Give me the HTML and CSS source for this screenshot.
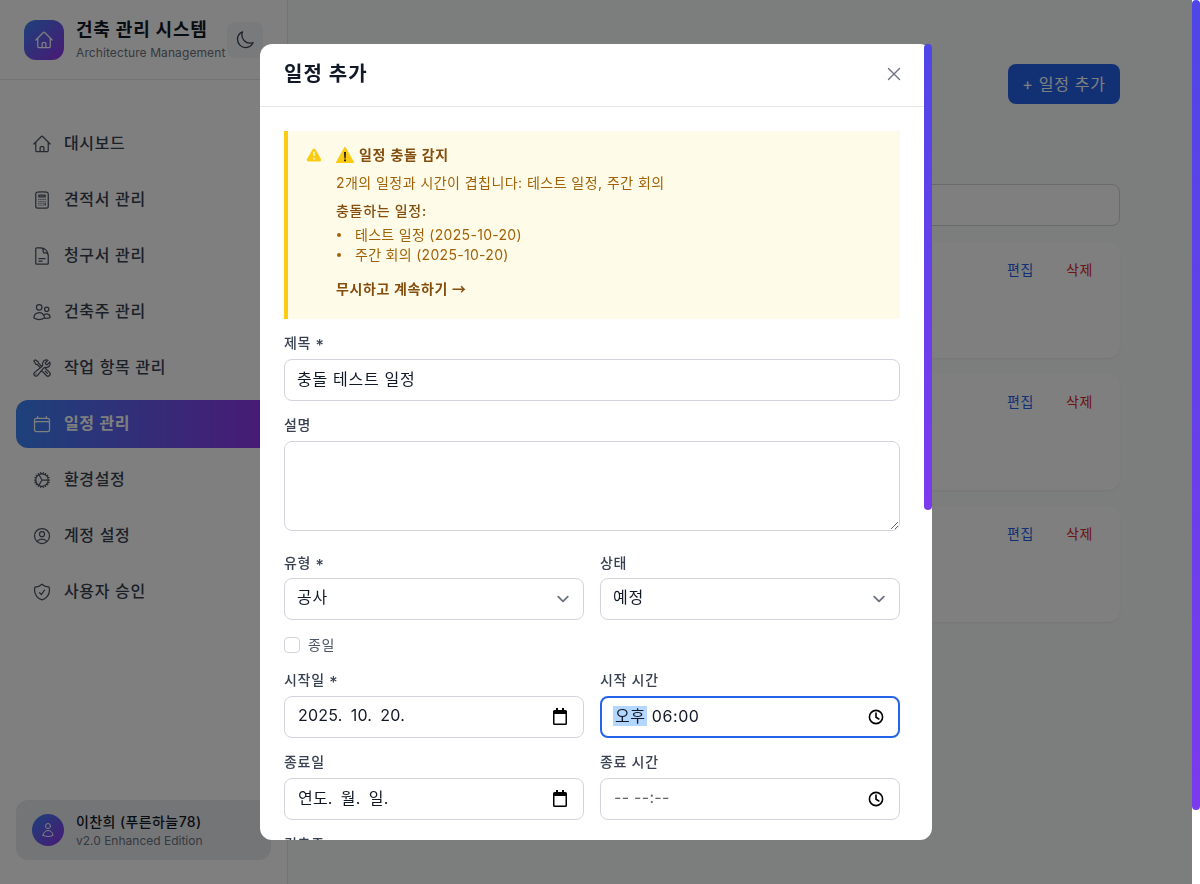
FILE: index.html
```html
<!DOCTYPE html>
<html lang="ko">
<head>
  <meta charset="UTF-8">
  <title>건축 관리 시스템 | 일정 관리</title>
  <meta name="viewport" content="width=device-width, initial-scale=1.0" />
  <link rel="stylesheet" href="styles.css">
</head>
<body>
  <svg class="sprite" aria-hidden="true">
    <symbol id="i-home" viewBox="0 0 24 24"><path d="m2.25 12 8.954-8.955c.44-.439 1.152-.439 1.591 0L21.75 12M4.5 9.75v10.125c0 .621.504 1.125 1.125 1.125H9.75v-4.875c0-.621.504-1.125 1.125-1.125h2.25c.621 0 1.125.504 1.125 1.125V21h4.125c.621 0 1.125-.504 1.125-1.125V9.75M8.25 21h8.25"/></symbol>
    <symbol id="i-picker-date" viewBox="0 0 20 20"><path class="solid" d="M6 1h2v2h4V1h2v2h1.5A1.5 1.5 0 0 1 17 4.5v12a1.5 1.5 0 0 1-1.5 1.5h-11A1.5 1.5 0 0 1 3 16.5v-12A1.5 1.5 0 0 1 4.5 3H6V1zM4.5 7v9.5h11V7h-11z"/></symbol>
    <symbol id="i-picker-time" viewBox="0 0 20 20"><circle cx="10" cy="10" r="6.6" class="line"/><path class="line" d="M10 6v4.3l2.8 1.7"/></symbol>
  </svg>

  <div class="app">
    <aside class="sidebar">
      <div class="brand">
        <div class="brand-logo">
          <svg class="icon" viewBox="0 0 24 24"><use href="#i-home"/></svg>
        </div>
        <div class="brand-text">
          <div class="brand-name">건축 관리 시스템</div>
          <div class="brand-sub">Architecture Management</div>
        </div>
        <button class="theme-toggle" type="button" aria-label="테마">
          <svg class="icon" viewBox="0 0 24 24"><path d="M21.752 15.002A9.72 9.72 0 0 1 18 15.75c-5.385 0-9.75-4.365-9.75-9.75 0-1.33.266-2.597.748-3.752A9.753 9.753 0 0 0 3 11.25C3 16.635 7.365 21 12.75 21a9.753 9.753 0 0 0 9.002-5.998Z"/></svg>
        </button>
      </div>

      <nav class="nav">
        <a class="nav-item" href="#">
          <svg class="icon" viewBox="0 0 24 24"><use href="#i-home"/></svg>
          <span>대시보드</span>
        </a>
        <a class="nav-item" href="#">
          <svg class="icon" viewBox="0 0 24 24"><path d="M15.75 15.75V18m-7.5-6.75h.008v.008H8.25v-.008Zm0 2.25h.008v.008H8.25V13.5Zm0 2.25h.008v.008H8.25v-.008Zm0 2.25h.008v.008H8.25V18Zm2.498-6.75h.007v.008h-.007v-.008Zm0 2.25h.007v.008h-.007V13.5Zm0 2.25h.007v.008h-.007v-.008Zm0 2.25h.007v.008h-.007V18Zm2.504-6.75h.008v.008h-.008v-.008Zm0 2.25h.008v.008h-.008V13.5Zm0 2.25h.008v.008h-.008v-.008Zm0 2.25h.008v.008h-.008V18Zm2.498-6.75h.008v.008h-.008v-.008Zm0 2.25h.008v.008h-.008V13.5ZM8.25 6h7.5v2.25h-7.5V6ZM12 2.25c-1.892 0-3.758.11-5.593.322C5.307 2.7 4.5 3.65 4.5 4.757V19.5a2.25 2.25 0 0 0 2.25 2.25h10.5a2.25 2.25 0 0 0 2.25-2.25V4.757c0-1.108-.806-2.057-1.907-2.185A48.507 48.507 0 0 0 12 2.25Z"/></svg>
          <span>견적서 관리</span>
        </a>
        <a class="nav-item" href="#">
          <svg class="icon" viewBox="0 0 24 24"><path d="M19.5 14.25v-2.625a3.375 3.375 0 0 0-3.375-3.375h-1.5A1.125 1.125 0 0 1 13.5 7.125v-1.5a3.375 3.375 0 0 0-3.375-3.375H8.25m0 12.75h7.5m-7.5 3H12M10.5 2.25H5.625c-.621 0-1.125.504-1.125 1.125v17.25c0 .621.504 1.125 1.125 1.125h12.75c.621 0 1.125-.504 1.125-1.125V11.25a9 9 0 0 0-9-9Z"/></svg>
          <span>청구서 관리</span>
        </a>
        <a class="nav-item" href="#">
          <svg class="icon" viewBox="0 0 24 24"><path d="M15 19.128a9.38 9.38 0 0 0 2.625.372 9.337 9.337 0 0 0 4.121-.952 4.125 4.125 0 0 0-7.533-2.493M15 19.128v-.003c0-1.113-.285-2.16-.786-3.07M15 19.128v.106A12.318 12.318 0 0 1 8.624 21c-2.331 0-4.512-.645-6.374-1.766l-.001-.109a6.375 6.375 0 0 1 11.964-3.07M12 6.375a3.375 3.375 0 1 1-6.75 0 3.375 3.375 0 0 1 6.75 0Zm8.25 2.25a2.625 2.625 0 1 1-5.25 0 2.625 2.625 0 0 1 5.25 0Z"/></svg>
          <span>건축주 관리</span>
        </a>
        <a class="nav-item" href="#">
          <svg class="icon" viewBox="0 0 24 24"><path d="M11.42 15.17 17.25 21A2.652 2.652 0 0 0 21 17.25l-5.877-5.877M11.42 15.17l2.496-3.03c.317-.384.74-.626 1.208-.766M11.42 15.17l-4.655 5.653a2.548 2.548 0 1 1-3.586-3.586l6.837-5.63m5.108-.233c.55-.164 1.163-.188 1.743-.14a4.5 4.5 0 0 0 4.486-6.336l-3.276 3.277a3.004 3.004 0 0 1-2.25-2.25l3.276-3.276a4.5 4.5 0 0 0-6.336 4.486c.091 1.076-.071 2.264-.904 2.95l-.102.085m-1.745 1.437L5.909 7.5H4.5L2.25 3.75l1.5-1.5L7.5 4.5v1.409l4.26 4.26m-1.745 1.437 1.745-1.437m6.615 8.206L15.75 15.75M4.867 19.125h.008v.008h-.008v-.008Z"/></svg>
          <span>작업 항목 관리</span>
        </a>
        <a class="nav-item active" href="#">
          <svg class="icon" viewBox="0 0 24 24"><path d="M6.75 3v2.25M17.25 3v2.25M3 18.75V7.5a2.25 2.25 0 0 1 2.25-2.25h13.5A2.25 2.25 0 0 1 21 7.5v11.25m-18 0A2.25 2.25 0 0 0 5.25 21h13.5A2.25 2.25 0 0 0 21 18.75m-18 0v-7.5A2.25 2.25 0 0 1 5.25 9h13.5A2.25 2.25 0 0 1 21 11.25v7.5"/></svg>
          <span>일정 관리</span>
        </a>
        <a class="nav-item" href="#">
          <svg class="icon" viewBox="0 0 24 24"><path d="M4.5 12a7.5 7.5 0 0 0 15 0m-15 0a7.5 7.5 0 1 1 15 0m-15 0H3m16.5 0H21m-1.5 0H12m-8.457 3.077 1.41-.513m14.095-5.13 1.41-.513M5.106 17.785l1.15-.964m11.49-9.642 1.149-.964M7.501 19.795l.75-1.3m7.5-12.99.75-1.3m-6.063 16.658.26-1.477m2.605-14.772.26-1.477m0 17.726-.26-1.477M10.698 4.614l-.26-1.477M16.5 19.794l-.75-1.299M7.5 4.205 12 12m6.894 5.785-1.149-.964M6.256 7.178l-1.15-.964m15.352 8.864-1.41-.513M4.954 9.435l-1.41-.514M12.002 12l-3.75 6.495"/></svg>
          <span>환경설정</span>
        </a>
        <a class="nav-item" href="#">
          <svg class="icon" viewBox="0 0 24 24"><path d="M17.982 18.725A7.488 7.488 0 0 0 12 15.75a7.488 7.488 0 0 0-5.982 2.975m11.963 0a9 9 0 1 0-11.963 0m11.963 0A8.966 8.966 0 0 1 12 21a8.966 8.966 0 0 1-5.982-2.275M15 9.75a3 3 0 1 1-6 0 3 3 0 0 1 6 0Z"/></svg>
          <span>계정 설정</span>
        </a>
        <a class="nav-item" href="#">
          <svg class="icon" viewBox="0 0 24 24"><path d="M9 12.75 11.25 15 15 9.75m-3-7.036A11.959 11.959 0 0 1 3.598 6 11.99 11.99 0 0 0 3 9.749c0 5.592 3.824 10.29 9 11.623 5.176-1.332 9-6.03 9-11.622 0-1.31-.21-2.571-.598-3.751h-.152c-3.196 0-6.1-1.248-8.25-3.286Z"/></svg>
          <span>사용자 승인</span>
        </a>
      </nav>

      <div class="user-card">
        <div class="user-avatar">
          <svg class="icon" viewBox="0 0 24 24"><path d="M15.75 6a3.75 3.75 0 1 1-7.5 0 3.75 3.75 0 0 1 7.5 0ZM4.501 20.118a7.5 7.5 0 0 1 14.998 0A17.933 17.933 0 0 1 12 21.75c-2.676 0-5.216-.584-7.499-1.632Z"/></svg>
        </div>
        <div>
          <div class="user-name">이찬희 (푸른하늘78)</div>
          <div class="user-sub">v2.0 Enhanced Edition</div>
        </div>
      </div>
    </aside>

    <main class="main">
      <div class="page-head">
        <button class="btn-primary" type="button">+ 일정 추가</button>
      </div>
      <div class="search-box"></div>
      <div class="card-list">
        <div class="card"><a class="link-edit" href="#">편집</a><a class="link-delete" href="#">삭제</a></div>
        <div class="card"><a class="link-edit" href="#">편집</a><a class="link-delete" href="#">삭제</a></div>
        <div class="card"><a class="link-edit" href="#">편집</a><a class="link-delete" href="#">삭제</a></div>
      </div>
    </main>

    <div class="overlay">
      <div class="modal">
        <div class="modal-inner">
          <div class="modal-head">
            <h2>일정 추가</h2>
            <button class="modal-close" type="button" aria-label="닫기">
              <svg class="icon" viewBox="0 0 24 24"><path d="M6 18 18 6M6 6l12 12"/></svg>
            </button>
          </div>

          <div class="modal-body">
            <div class="alert">
              <svg class="alert-icon" viewBox="0 0 20 20"><path fill-rule="evenodd" d="M8.485 2.495c.673-1.167 2.357-1.167 3.03 0l6.28 10.875c.673 1.167-.17 2.625-1.516 2.625H3.72c-1.347 0-2.189-1.458-1.515-2.625L8.485 2.495zM10 5a.75.75 0 01.75.75v3.5a.75.75 0 01-1.5 0v-3.5A.75.75 0 0110 5zm0 9a1 1 0 100-2 1 1 0 000 2z"/></svg>
              <div>
                <div class="alert-title">
                  <svg class="alert-emoji" viewBox="0 0 18 16"><path class="emoji-back" d="M9 0 18 16H0Z"/><path class="emoji-mark" d="M8 5h2l-.3 6.5H8.3ZM8 12.5h2v1.8H8Z"/></svg>
                  일정 충돌 감지
                </div>
                <p class="alert-text">2개의 일정과 시간이 겹칩니다: 테스트 일정, 주간 회의</p>
                <p class="alert-sub">충돌하는 일정:</p>
                <ul class="alert-list">
                  <li>테스트 일정 (2025-10-20)</li>
                  <li>주간 회의 (2025-10-20)</li>
                </ul>
                <a class="alert-link" href="#">무시하고 계속하기 <span class="arrow">→</span></a>
              </div>
            </div>

            <form class="form">
              <div class="field">
                <label>제목 <span class="req">*</span></label>
                <input class="control" type="text" value="충돌 테스트 일정">
              </div>
              <div class="field field-area">
                <label>설명</label>
                <textarea class="control area"></textarea>
              </div>
              <div class="two-col">
                <div class="field">
                  <label class="label-tight">유형 <span class="req">*</span></label>
                  <select class="control select"><option>공사</option></select>
                </div>
                <div class="field">
                  <label class="label-tight">상태</label>
                  <select class="control select"><option>예정</option></select>
                </div>
              </div>
              <label class="check-row"><input type="checkbox"> <span>종일</span></label>
              <div class="two-col">
                <div class="field">
                  <label>시작일 <span class="req">*</span></label>
                  <div class="control picker">
                    <span class="date-value">2025. 10. 20.</span>
                    <svg class="picker-icon" viewBox="0 0 20 20"><use href="#i-picker-date"/></svg>
                  </div>
                </div>
                <div class="field">
                  <label>시작 시간</label>
                  <div class="control picker focused">
                    <span class="time-value"><span class="selected">오후</span> 06:00</span>
                    <svg class="picker-icon" viewBox="0 0 20 20"><use href="#i-picker-time"/></svg>
                  </div>
                </div>
              </div>
              <div class="two-col">
                <div class="field">
                  <label>종료일</label>
                  <div class="control picker">
                    <span class="date-value">연도. 월. 일.</span>
                    <svg class="picker-icon" viewBox="0 0 20 20"><use href="#i-picker-date"/></svg>
                  </div>
                </div>
                <div class="field">
                  <label>종료 시간</label>
                  <div class="control picker">
                    <span class="time-empty">-- --:--</span>
                    <svg class="picker-icon" viewBox="0 0 20 20"><use href="#i-picker-time"/></svg>
                  </div>
                </div>
              </div>
              <div class="field">
                <label>건축주</label>
              </div>
            </form>
          </div>
        </div>

        <div class="modal-thumb"></div>
      </div>
    </div>

    <div class="page-scrollbar"><div class="page-thumb"></div></div>
  </div>
</body>
</html>
```

FILE: styles.css
```css
* {
  box-sizing: border-box;
}

body {
  margin: 0;
  height: 100vh;
  overflow: hidden;
  font-family: Inter, 'Noto Sans CJK KR', sans-serif;
  background-color: #fff;
  color: #111827;
}

.sprite {
  display: none;
}

.app {
  display: flex;
  height: 100vh;
}

.icon {
  width: 20px;
  height: 20px;
  flex: none;
  fill: none;
  stroke: currentColor;
  stroke-width: 1.5;
  stroke-linecap: round;
  stroke-linejoin: round;
}

/* sidebar */
.sidebar {
  width: 288px;
  flex: none;
  display: flex;
  flex-direction: column;
  background: #fff;
  border-right: 1px solid #e5e7eb;
}

.brand {
  height: 80px;
  flex: none;
  display: flex;
  align-items: center;
  padding: 0 24px;
  border-bottom: 1px solid #e5e7eb;
}

.brand-logo {
  width: 40px;
  height: 40px;
  flex: none;
  display: flex;
  align-items: center;
  justify-content: center;
  margin-right: 12px;
  border-radius: 12px;
  background: linear-gradient(135deg, #3b82f6, #9333ea);
  color: #fff;
}

.brand-name {
  font-size: 18px;
  line-height: 24px;
  font-weight: 700;
  letter-spacing: 0.8px;
  white-space: nowrap;
}

.brand-sub {
  margin-top: 3px;
  font-size: 12px;
  line-height: 16px;
  letter-spacing: 0.1px;
  color: #6b7280;
  white-space: nowrap;
}

.theme-toggle {
  width: 36px;
  height: 36px;
  flex: none;
  display: flex;
  align-items: center;
  justify-content: center;
  margin-left: 2px;
  padding: 0;
  border: none;
  border-radius: 8px;
  background: #f3f4f6;
  color: #374151;
}

.nav {
  display: flex;
  flex-direction: column;
  gap: 8px;
  padding: 40px 16px 0;
}

.nav-item {
  height: 48px;
  display: flex;
  align-items: center;
  gap: 12px;
  padding: 0 16px;
  border-radius: 12px;
  font-size: 16px;
  font-weight: 500;
  letter-spacing: 0.65px;
  color: #374151;
  text-decoration: none;
}

.nav-item span {
  margin-bottom: 4px;
}

.nav-item .icon {
  color: #4b5563;
}

.nav-item.active {
  background: linear-gradient(90deg, #3b82f6, #9333ea);
  color: #fff;
  font-weight: 600;
}

.nav-item.active .icon {
  color: #fff;
}

.user-card {
  margin: auto 16px 24px;
  height: 60px;
  flex: none;
  display: flex;
  align-items: center;
  gap: 12px;
  padding: 0 16px;
  border-radius: 12px;
  background: #e9ebef;
}

.user-avatar {
  width: 32px;
  height: 32px;
  flex: none;
  display: flex;
  align-items: center;
  justify-content: center;
  border-radius: 50%;
  background: linear-gradient(135deg, #3b82f6, #9333ea);
  color: #fff;
}

.user-avatar .icon {
  width: 16px;
  height: 16px;
}

.user-name {
  font-size: 14px;
  line-height: 20px;
  font-weight: 500;
  letter-spacing: 0.4px;
}

.user-sub {
  margin-top: 1px;
  font-size: 12px;
  line-height: 16px;
  color: #6b7280;
}

/* main behind the modal */
.main {
  flex: 1;
  min-width: 0;
  padding: 64px 72px 0 32px;
  background: #f9fafb;
}

.page-head {
  display: flex;
  justify-content: flex-end;
}

.btn-primary {
  width: 112px;
  height: 40px;
  padding: 0 0 3px;
  border: none;
  border-radius: 8px;
  background: #2563eb;
  color: #fff;
  font-family: inherit;
  font-size: 16px;
  letter-spacing: 0.7px;
}

.search-box {
  height: 42px;
  margin-top: 80px;
  border: 1px solid #d1d5db;
  border-radius: 8px;
  background: #fff;
}

.card-list {
  display: flex;
  flex-direction: column;
  gap: 16px;
  margin-top: 16px;
}

.card {
  height: 116px;
  display: flex;
  justify-content: flex-end;
  gap: 32px;
  padding: 18px 27px 0 0;
  border-radius: 12px;
  background: #fff;
  box-shadow: 0 1px 2px rgba(0, 0, 0, 0.05);
  font-size: 14px;
  line-height: 20px;
  letter-spacing: 0.6px;
}

.link-edit {
  color: #2563eb;
  text-decoration: none;
}

.link-delete {
  color: #dc2626;
  text-decoration: none;
}

.page-scrollbar {
  width: 8px;
  flex: none;
  background: #fff;
}

.page-thumb {
  height: 810px;
  border-radius: 4px;
  background: linear-gradient(180deg, #4f46e5, #7c3aed);
}

/* modal */
.overlay {
  position: fixed;
  top: 0;
  left: 0;
  bottom: 0;
  width: 1192px;
  display: flex;
  align-items: center;
  justify-content: center;
  background: rgba(0, 0, 0, 0.5);
}

.modal {
  position: relative;
  width: 672px;
  height: 796px;
}

.modal-inner {
  height: 100%;
  overflow: hidden;
  border-radius: 12px;
  background: #fff;
}

.modal-head {
  height: 63px;
  display: flex;
  align-items: center;
  justify-content: space-between;
  padding: 0 27px 3px 24px;
  border-bottom: 1px solid #e5e7eb;
}

.modal-head h2 {
  margin: 0 0 2px;
  font-size: 20px;
  font-weight: 700;
  letter-spacing: 1.1px;
}

.modal-close {
  display: flex;
  padding: 0;
  border: none;
  background: none;
  color: #6b7280;
}

.modal-close .icon {
  width: 22px;
  height: 22px;
}

.modal-body {
  width: 664px;
  padding: 24px;
}

.modal-thumb {
  position: absolute;
  top: 0;
  right: 0;
  width: 8px;
  height: 466px;
  border-radius: 4px;
  background: linear-gradient(180deg, #4f46e5, #7c3aed);
}

.alert {
  height: 188px;
  display: flex;
  gap: 13px;
  padding: 14px 16px 0 17px;
  border-left: 4px solid #facc15;
  background: #fefce8;
  font-size: 14px;
  line-height: 20px;
  color: #a16207;
}

.alert-icon {
  width: 18px;
  height: 18px;
  flex: none;
  margin-top: 2px;
  fill: #facc15;
}

.alert-title {
  display: flex;
  align-items: center;
  gap: 5px;
  font-weight: 600;
  letter-spacing: 0.7px;
  color: #854d0e;
}

.alert-emoji {
  width: 18px;
  height: 16px;
  flex: none;
}

.emoji-back {
  fill: #fbcb14;
  stroke: #fbcb14;
  stroke-linejoin: round;
}

.emoji-mark {
  fill: #222;
}

.alert-text,
.alert-sub {
  margin: 8px 0 0;
}

.alert-text {
  letter-spacing: 0.45px;
}

.alert-sub {
  font-weight: 500;
  letter-spacing: 0.7px;
  color: #854d0e;
}

.alert-list {
  margin: 4px 0 0;
  padding: 0;
  list-style: none;
  letter-spacing: 0.3px;
}

.alert-list li {
  display: flex;
  align-items: center;
}

.alert-list li::before {
  content: '';
  width: 4px;
  height: 4px;
  margin: 0 14px 0 1px;
  border-radius: 50%;
  background: currentColor;
}

.alert-link {
  display: block;
  height: 20px;
  margin-top: 14px;
  font-weight: 600;
  letter-spacing: 0.6px;
  color: #854d0e;
  text-decoration: none;
}

.arrow {
  font-family: 'Noto Sans CJK KR', sans-serif;
  line-height: 1;
  letter-spacing: 0;
}

/* form */
.form {
  display: flex;
  flex-direction: column;
  gap: 14px;
  margin-top: 14px;
}

.field label {
  display: block;
  margin-bottom: 6px;
  font-size: 14px;
  line-height: 20px;
  font-weight: 500;
  letter-spacing: 0.7px;
  color: #374151;
}

.field .label-tight {
  margin-bottom: 5px;
}

.req {
  font-size: 16px;
  line-height: 1;
  vertical-align: -3px;
}

.field-area {
  margin-bottom: 8px;
}

.control {
  display: block;
  width: 100%;
  height: 42px;
  padding: 0 12px 4px;
  border: 1px solid #d1d5db;
  border-radius: 8px;
  background: #fff;
  font-family: inherit;
  font-size: 16px;
  letter-spacing: 0.7px;
  color: #111827;
  outline: none;
}

.area {
  height: 90px;
  padding: 8px 12px;
  resize: vertical;
}

.select {
  appearance: none;
  background-image: url("data:image/svg+xml,%3Csvg xmlns='http://www.w3.org/2000/svg' fill='none' viewBox='0 0 20 20'%3E%3Cpath stroke='%236b7280' stroke-linecap='round' stroke-linejoin='round' stroke-width='1.5' d='M6 8l4 4 4-4'/%3E%3C/svg%3E");
  background-position: right 8px center;
  background-repeat: no-repeat;
  background-size: 24px 24px;
}

.two-col {
  display: grid;
  grid-template-columns: 1fr 1fr;
  gap: 16px;
}

.check-row {
  display: flex;
  align-items: center;
  gap: 8px;
  height: 16px;
  margin: 3px 0;
  font-size: 14px;
  letter-spacing: 0.7px;
  color: #4b5563;
}

.check-row span {
  margin-bottom: 2px;
}

.check-row input {
  appearance: none;
  width: 16px;
  height: 16px;
  margin: 0;
  border: 1px solid #d1d5db;
  border-radius: 4px;
  background: #fff;
}

.picker {
  display: flex;
  align-items: center;
  justify-content: space-between;
  padding: 0 13px;
}

.picker > span {
  margin-bottom: 4px;
}

.picker-icon {
  width: 20px;
  height: 20px;
  flex: none;
}

.solid {
  fill: #000;
}

.line {
  fill: none;
  stroke: #000;
  stroke-width: 1.6;
  stroke-linecap: round;
}

.date-value {
  letter-spacing: 0.2px;
  word-spacing: 3.5px;
}

.time-value {
  letter-spacing: 0.6px;
}

.time-empty {
  letter-spacing: 0.3px;
  color: #666;
}

.picker.focused {
  border: 2px solid #2563eb;
  padding: 0 12px 0 11px;
}

.selected {
  padding: 0 1px 0 2px;
  background: #b4d7ff;
}
```
